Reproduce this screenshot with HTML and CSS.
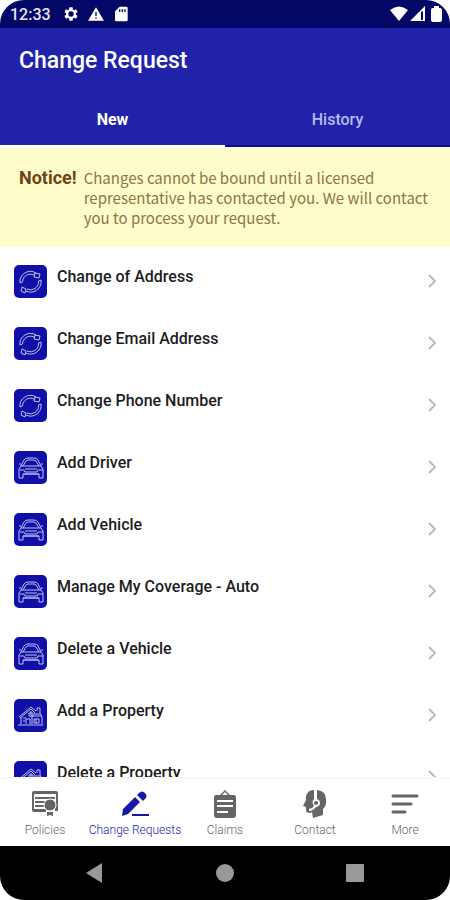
FILE: index.html
```html
<!DOCTYPE html>
<html lang="en">
<head>
  <meta charset="UTF-8" />
  <meta name="viewport" content="width=device-width, initial-scale=1.0"/>
  <title>Change Request</title>
  <link rel="stylesheet" href="styles.css">
</head>
<body>
  <!-- Shared icons -->
  <svg class="sprite" aria-hidden="true">
    <symbol id="icon-cycle" viewBox="0 0 33 33">
      <path d="M6 18A10.500 10.500 0 0 1 22 8M8.500 17A8 8 0 0 1 20 10M6 18l2.500-1M27 15A10.500 10.500 0 0 1 12 26M24.500 16A8 8 0 0 1 13 24M27 15l-2.500 1M21 8l5 1-1 4-5-1zM8 22l4 2-1 4-4-2z"/>
    </symbol>
    <symbol id="icon-car" viewBox="0 0 33 33">
      <path d="M7 15l3-6q1-2 4-2h6q3 0 4 2l3 6M9 15l3-5q1-1 2-1h6q1 0 2 1l3 5M5 13h2M27 13h2M7 15h20l2 3v9h-4v-4H9v4H5v-9zM6 19h4l1 2h12l1-2h5M11 18h12M9 23h16"/>
    </symbol>
    <symbol id="icon-house" viewBox="0 0 33 33">
      <path d="M5 18L17 8l5 4M6 19l11-9 4 4M7 18v7M4 26h25M23 12V9h3v5l2 4v7M17 17h11M12 25v-5h4v5M20 20h5v4h-5zM18 17v8M9 19h3M9 22h2M22 20v4M15 14h4v3h-4zM17 12v4M20 15h6"/>
    </symbol>
    <symbol id="icon-chevron" viewBox="0 0 10 16">
      <path d="M2 2l6 6-6 6"/>
    </symbol>
  </svg>

  <div class="phone">
    <div class="status-bar">
      <span class="time">12:33</span>
      <svg class="status-icon" viewBox="0 0 24 24"><path fill-rule="evenodd" d="M19.400 13a8 8 0 0 0 0-2l2.500-2-2.400-4-2.900 1.200a8 8 0 0 0-1.700-1L14.400 2H9.600l-.5 3.200a8 8 0 0 0-1.700 1L4.500 5 2.100 9l2.500 2a8 8 0 0 0 0 2l-2.500 2 2.400 4 2.900-1.200a8 8 0 0 0 1.700 1l.5 3.200h4.800l.5-3.200a8 8 0 0 0 1.700-1l2.900 1.200 2.400-4zM12 8a4 4 0 1 1 0 8 4 4 0 0 1 0-8z"/></svg>
      <svg class="status-icon" viewBox="0 0 24 24"><path fill-rule="evenodd" d="M12 2L0 22h24zM11 9h2v6h-2zM11 17h2v2h-2z"/></svg>
      <svg class="status-icon" viewBox="0 0 24 24"><path fill-rule="evenodd" d="M10 1h10q2 0 2 2v18q0 2-2 2H5q-2 0-2-2V8zM9 5h2v4H9zM13 5h2v4h-2zM17 5h2v4h-2z"/></svg>
      <span class="status-right">
        <svg width="18" height="16" viewBox="0 0 18 16"><path d="M0 4Q9-3 18 4L9 15z"/></svg>
        <svg width="15" height="16" viewBox="0 0 15 16"><path fill-rule="evenodd" d="M0 15L15 0v15zM11 6v8h2V5z"/></svg>
        <svg class="battery" width="11" height="16" viewBox="0 0 11 16"><path d="M3 0h5v2h1q2 0 2 2v10q0 2-2 2H2q-2 0-2-2V4q0-2 2-2h1z"/></svg>
      </span>
    </div>

    <header class="header">
      <h1>Change Request</h1>
      <nav class="tabs">
        <button class="tab active">New</button>
        <button class="tab">History</button>
      </nav>
    </header>

    <div class="notice">
      <strong>Notice!</strong>
      <p>Changes cannot be bound until a licensed representative has contacted you. We will contact you to process your request.</p>
    </div>

    <main class="request-list">
      <button class="request">
        <svg class="request-icon"><use href="#icon-cycle"/></svg>
        <span>Change of Address</span>
        <svg class="chevron"><use href="#icon-chevron"/></svg>
      </button>
      <button class="request">
        <svg class="request-icon"><use href="#icon-cycle"/></svg>
        <span>Change Email Address</span>
        <svg class="chevron"><use href="#icon-chevron"/></svg>
      </button>
      <button class="request">
        <svg class="request-icon"><use href="#icon-cycle"/></svg>
        <span>Change Phone Number</span>
        <svg class="chevron"><use href="#icon-chevron"/></svg>
      </button>
      <button class="request">
        <svg class="request-icon"><use href="#icon-car"/></svg>
        <span>Add Driver</span>
        <svg class="chevron"><use href="#icon-chevron"/></svg>
      </button>
      <button class="request">
        <svg class="request-icon"><use href="#icon-car"/></svg>
        <span>Add Vehicle</span>
        <svg class="chevron"><use href="#icon-chevron"/></svg>
      </button>
      <button class="request">
        <svg class="request-icon"><use href="#icon-car"/></svg>
        <span>Manage My Coverage - Auto</span>
        <svg class="chevron"><use href="#icon-chevron"/></svg>
      </button>
      <button class="request">
        <svg class="request-icon"><use href="#icon-car"/></svg>
        <span>Delete a Vehicle</span>
        <svg class="chevron"><use href="#icon-chevron"/></svg>
      </button>
      <button class="request">
        <svg class="request-icon"><use href="#icon-house"/></svg>
        <span>Add a Property</span>
        <svg class="chevron"><use href="#icon-chevron"/></svg>
      </button>
      <button class="request">
        <svg class="request-icon"><use href="#icon-house"/></svg>
        <span>Delete a Property</span>
        <svg class="chevron"><use href="#icon-chevron"/></svg>
      </button>
    </main>

    <!-- App navigation -->
    <nav class="bottom-nav">
      <a href="#policies">
        <svg viewBox="0 0 28 28"><path fill-rule="evenodd" d="M3 1h22q2 0 2 2v18h-3v-3h1V4H3v15h12v3H3q-2 0-2-2V3q0-2 2-2zM4 7h20v2H4zM4 11h10v2H4zM4 15h9v2H4z"/><circle class="ring" cx="19" cy="15" r="6"/><path d="M16 22h6v4l-3-1-3 1z"/></svg>
        <span>Policies</span>
      </a>
      <a href="#requests" class="active">
        <svg viewBox="0 0 28 28"><path d="M1 26l1-7L14 7l5 5L7 24zM16 5l2-2q3-3 6 0t0 6l-2 2zM11 24h17v2H11z"/></svg>
        <span>Change Requests</span>
      </a>
      <a href="#claims">
        <svg viewBox="0 0 28 28"><path fill-rule="evenodd" d="M5 5h4l5-5 5 5h4q2 0 2 2v18q0 3-3 3H6q-3 0-3-3V7q0-2 2-2zM11 5h6l-3-3zM6 10h16v2H6zM6 15h16v2H6zM6 21h11v2H6z"/></svg>
        <span>Claims</span>
      </a>
      <a href="#contact">
        <svg viewBox="0 0 28 28"><path d="M13 0C7 0 4 5 5 10l-3 6 3 1v3q0 3 4 3l2-1 1 6 10-3v-6q4-4 3-10Q25 1 16 0v9q3 1 3 4t-4 4q-3 4-7 4v-2q3 0 5-3-3-4 0-7z"/><circle cx="15" cy="13" r="2"/></svg>
        <span>Contact</span>
      </a>
      <a href="#more">
        <svg viewBox="0 0 28 28"><path class="lines" d="M2 6h24M2 14h18M2 22h12"/></svg>
        <span>More</span>
      </a>
    </nav>

    <!-- Android navigation -->
    <div class="system-nav">
      <button aria-label="Back"><svg viewBox="0 0 20 20"><path d="M1 10L17 0v20z"/></svg></button>
      <button aria-label="Home"><svg viewBox="0 0 20 20"><circle cx="10" cy="10" r="9"/></svg></button>
      <button aria-label="Recent apps"><svg viewBox="0 0 20 20"><rect x="1" y="1" width="18" height="18" rx="1"/></svg></button>
    </div>
  </div>
</body>
</html>
```

FILE: styles.css
```css
* {
  box-sizing: border-box;
}

body {
  margin: 0;
  font-family: Roboto, 'Liberation Sans', sans-serif;
  background-color: #fff;
}

button {
  border: none;
  padding: 0;
  background: none;
  font-family: inherit;
}

.sprite {
  display: none;
}

.phone {
  display: flex;
  flex-direction: column;
  height: 100vh;
  overflow: hidden;
  border-radius: 24px;
}

/* Status bar */
.status-bar {
  display: flex;
  align-items: center;
  gap: 9px;
  height: 28px;
  padding: 0 8px 0 10px;
  color: #e4e4f4;
  fill: #fff;
  background-color: #030867;
  flex-shrink: 0;
}

.time {
  font-size: 16px;
  font-weight: 500;
  margin-right: 3px;
}

.status-icon {
  width: 16px;
  height: 16px;
}

.status-right {
  display: flex;
  align-items: center;
  gap: 2px;
  margin-left: auto;
}

.battery {
  margin-left: 4px;
}

/* Header and tabs */
.header {
  color: #fff;
  background-color: #2022aa;
  border-bottom: 2px solid #0808a0;
  flex-shrink: 0;
}

h1 {
  margin: 0;
  padding: 18px 19px;
  font-size: 23px;
  line-height: 30px;
  font-weight: 500;
}

.tabs {
  display: flex;
  margin-bottom: -2px;
}

.tab {
  flex: 1;
  height: 53px;
  font-size: 16px;
  font-weight: 500;
  color: #b8baf0;
  border-bottom: 2px solid transparent;
}

.tab.active {
  color: #fff;
  font-weight: 700;
  border-bottom-color: #fff;
}

/* Notice */
.notice {
  display: flex;
  gap: 7px;
  padding: 21px 19px 19px;
  color: #704214;
  background-color: #fffdcb;
  flex-shrink: 0;
}

.notice strong {
  font-size: 18px;
  line-height: 20px;
  font-weight: 700;
}

.notice p {
  margin: 0;
  font-family: 'Noto Sans CJK JP', 'Noto Sans', sans-serif;
  font-size: 15px;
  line-height: 20px;
  color: #8c7548;
}

/* Request list */
.request-list {
  flex: 1;
  min-height: 0;
  overflow: hidden;
  padding-top: 3px;
}

.request {
  display: flex;
  align-items: center;
  gap: 10px;
  width: 100%;
  height: 62px;
  padding: 0 13px 0 14px;
  text-align: left;
}

.request span {
  flex: 1;
  padding-bottom: 8px;
  font-size: 16px;
  line-height: 20px;
  font-weight: 500;
  color: #1c1c1c;
}

.request-icon {
  width: 33px;
  height: 33px;
  border-radius: 5px;
  background-color: #1010a8;
  fill: none;
  stroke: #c0c0f0;
  stroke-width: 1;
}

.chevron {
  width: 10px;
  height: 16px;
  fill: none;
  stroke: #bbb;
  stroke-width: 2;
}

/* Bottom navigation */
.bottom-nav {
  display: flex;
  height: 69px;
  padding-top: 11px;
  border-top: 2px solid #f8f8f8;
  background-color: #fff;
  flex-shrink: 0;
}

.bottom-nav a {
  flex: 1;
  min-width: 0;
  display: flex;
  flex-direction: column;
  align-items: center;
  gap: 4px;
  font-size: 12px;
  font-weight: 300;
  line-height: 16px;
  color: #666;
  fill: #656565;
  text-decoration: none;
  white-space: nowrap;
}

.bottom-nav a.active {
  color: #2222b0;
  fill: #1717aa;
}

.bottom-nav svg {
  width: 28px;
  height: 28px;
}

.ring {
  stroke: #fff;
}

.lines {
  stroke: #656565;
  stroke-width: 3;
  stroke-linecap: round;
}

/* System navigation */
.system-nav {
  display: flex;
  justify-content: center;
  gap: 110px;
  height: 54px;
  background-color: #000;
  flex-shrink: 0;
}

.system-nav svg {
  display: block;
  width: 20px;
  height: 20px;
  fill: #999;
}
```
